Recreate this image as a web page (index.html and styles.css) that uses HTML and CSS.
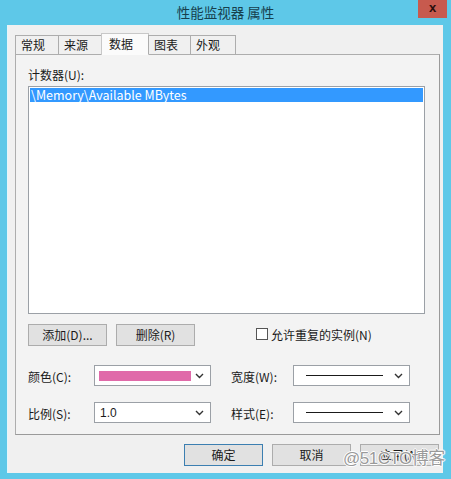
FILE: index.html
```html
<!DOCTYPE html>
<html lang="zh-CN">
<head>
    <meta charset="UTF-8">
    <title>性能监视器 属性</title>
    <link rel="stylesheet" href="styles.css">
</head>
<body>
    <div class="window">
        <div class="titlebar">
            <span class="title">性能监视器 属性</span>
            <span class="close">x</span>
        </div>
        <div class="client">
            <div class="tabs">
                <div class="tab t1">常规</div>
                <div class="tab t2">来源</div>
                <div class="tab t3 active">数据</div>
                <div class="tab t4">图表</div>
                <div class="tab t5">外观</div>
            </div>
            <div class="panel">
                <div class="caption">计数器(U):</div>
                <div class="listbox">
                    <div class="item selected">\Memory\Available MBytes</div>
                </div>

                <div class="btn-row">
                    <div class="btn">添加(D)...</div>
                    <div class="btn">删除(R)</div>
                    <label class="check"><span class="box"></span>允许重复的实例(N)</label>
                </div>

                <div class="field-row">
                    <span class="lbl">颜色(C):</span>
                    <div class="combo">
                        <span class="swatch"></span>
                        <svg class="arrow" width="9" height="6" viewBox="0 0 9 6"><path d="M1 1 L4.5 4.5 L8 1" fill="none" stroke="#333" stroke-width="1.4"/></svg>
                    </div>
                    <span class="lbl lbl2">宽度(W):</span>
                    <div class="combo">
                        <span class="line"></span>
                        <svg class="arrow" width="9" height="6" viewBox="0 0 9 6"><path d="M1 1 L4.5 4.5 L8 1" fill="none" stroke="#333" stroke-width="1.4"/></svg>
                    </div>
                </div>

                <div class="field-row">
                    <span class="lbl">比例(S):</span>
                    <div class="combo">
                        <span class="val">1.0</span>
                        <svg class="arrow" width="9" height="6" viewBox="0 0 9 6"><path d="M1 1 L4.5 4.5 L8 1" fill="none" stroke="#333" stroke-width="1.4"/></svg>
                    </div>
                    <span class="lbl lbl2">样式(E):</span>
                    <div class="combo">
                        <span class="line"></span>
                        <svg class="arrow" width="9" height="6" viewBox="0 0 9 6"><path d="M1 1 L4.5 4.5 L8 1" fill="none" stroke="#333" stroke-width="1.4"/></svg>
                    </div>
                </div>
            </div>

            <div class="footer">
                <div class="btn default">确定</div>
                <div class="btn">取消</div>
                <div class="btn">应用(A)</div>
            </div>
        </div>
        <div class="watermark">@51CTO博客</div>
    </div>
</body>
</html>
```

FILE: styles.css
```css
* {
    box-sizing: border-box;
    margin: 0;
    padding: 0;
}

html, body {
    width: 451px;
    height: 479px;
    overflow: hidden;
    background-color: #5ec8e8;
    font-family: "Noto Sans CJK SC", "Liberation Sans", sans-serif;
    font-size: 12px;
    color: #1a1a1a;
}

.window {
    position: relative;
    height: 479px;
}

.titlebar {
    height: 25px;
    display: flex;
    justify-content: center;
    align-items: center;
    position: relative;
}

.title {
    font-size: 13.5px;
    color: #173f4d;
    margin-top: -1px;
}

.close {
    position: absolute;
    right: 4px;
    top: 0;
    width: 29px;
    height: 18px;
    background-color: #c75a4e;
    color: #2a0f0c;
    font-family: "Liberation Sans", sans-serif;
    font-weight: bold;
    font-size: 13px;
    line-height: 16px;
    text-align: center;
}

.client {
    margin: 0 8px 0 7px;
    height: 448px;
    background-color: #f0f0f0;
    border-left: 1px solid #e4f6fb;
    padding: 8px 3px 0 7px;
}

/* tabs */
.tabs {
    display: flex;
    align-items: flex-end;
    height: 21px;
    position: relative;
    z-index: 1;
}

.tab {
    height: 19px;
    border: 1px solid #adadad;
    border-bottom: none;
    margin-right: -1px;
    background-color: #f0f0f0;
    padding-left: 5px;
    line-height: 17px;
}

.t1 { width: 44px; }
.t2 { width: 44px; }
.t3 { width: 48px; }
.t4 { width: 43px; }
.t5 { width: 46px; }

.tab.active {
    height: 22px;
    margin-bottom: -1px;
    background-color: #fbfbfb;
    padding-left: 7px;
    line-height: 19px;
    border-color: #c8c8c8;
}

.panel {
    width: 425px;
    height: 381px;
    border: 1px solid #adadad;
    border-right-color: #9a9a9a;
    border-bottom-color: #9a9a9a;
    background-color: #f3f3f3;
    padding: 10px 0 0 12px;
}

.caption {
    height: 20px;
    line-height: 20px;
}

.listbox {
    width: 397px;
    height: 228px;
    margin-top: 1px;
    border: 1px solid #9ba0a6;
    background-color: #ffffff;
    padding: 1px;
}

.item {
    height: 14px;
    line-height: 14px;
    font-size: 12.5px;
    padding-left: 1px;
}

.item.selected {
    background-color: #3399ff;
    color: #ffffff;
}

.btn-row {
    display: flex;
    align-items: center;
    margin-top: 10px;
    height: 22px;
}

.btn {
    width: 79px;
    height: 22px;
    border: 1px solid #acacac;
    background-color: #e1e1e1;
    text-align: center;
    line-height: 20px;
    margin-right: 9px;
}

.check {
    display: flex;
    align-items: center;
    margin-left: 52px;
    margin-top: -2px;
}

.box {
    width: 12px;
    height: 12px;
    border: 1px solid #555;
    background-color: #ffffff;
    margin-right: 3px;
}

.field-row {
    display: flex;
    align-items: center;
    height: 21px;
}

.btn-row + .field-row {
    margin-top: 19px;
}

.field-row + .field-row {
    margin-top: 16px;
}

.lbl {
    width: 66px;
    padding-top: 2px;
}

.lbl2 {
    width: 62px;
    margin-left: 20px;
}

.combo {
    width: 117px;
    height: 21px;
    border: 1px solid #9ba0a6;
    background-color: #ffffff;
    display: flex;
    align-items: center;
    position: relative;
    padding-left: 4px;
}

.swatch {
    width: 92px;
    height: 10px;
    background-color: #e06aa9;
}

.line {
    width: 77px;
    height: 1px;
    background-color: #1a1a1a;
    margin-left: 8px;
}

.val {
    font-family: "Liberation Sans", sans-serif;
    font-size: 12px;
    margin-left: 1px;
}

.arrow {
    position: absolute;
    right: 6px;
    top: 7px;
}

/* bottom buttons */
.footer {
    display: flex;
    justify-content: flex-end;
    margin-top: 9px;
    padding-right: 1px;
}

.footer .btn {
    margin-right: 0;
    margin-left: 9px;
}

.footer .btn.default {
    border-color: #3c7fb1;
}

.watermark {
    position: absolute;
    left: 343px;
    top: 444px;
    font-size: 17px;
    color: #9a9a9a;
    letter-spacing: -0.5px;
    text-shadow: -1px 0 #fff, 1px 0 #fff, 0 -1px #fff, 0 1px #fff;
    font-family: "Liberation Sans", "Noto Sans CJK SC", sans-serif;
}
```
